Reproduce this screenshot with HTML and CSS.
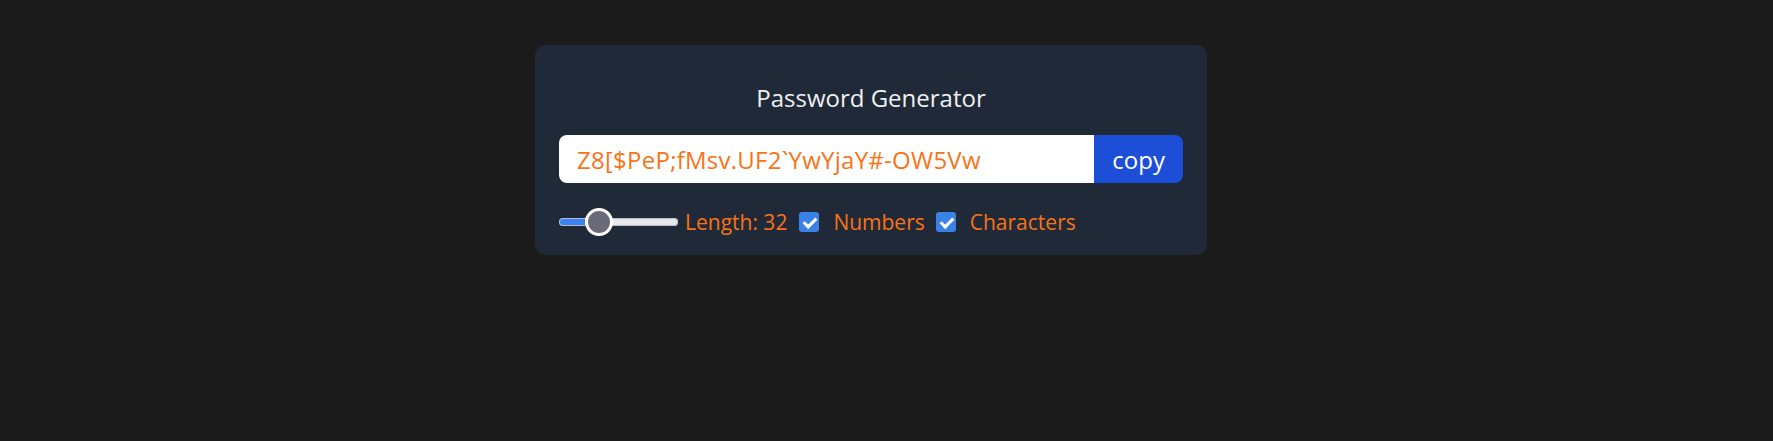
FILE: index.html
```html
<!DOCTYPE html>
<html lang="en">
<head>
<meta charset="utf-8">
<title>Password Generator</title>
<link rel="stylesheet" href="styles.css">
</head>
<body>
<main class="card">
  <h1 class="title">Password Generator</h1>
  <div class="output">
    <input class="password" type="text" value="Z8[$PeP;fMsv.UF2`YwYjaY#-OW5Vw" readonly>
    <button class="copy" type="button">copy</button>
  </div>
  <div class="options">
    <input class="range" type="range" min="8" max="92" value="32">
    <label class="length">Length: 32</label>
    <input class="check" type="checkbox" id="numbers" checked>
    <label class="opt" for="numbers">Numbers</label>
    <input class="check" type="checkbox" id="chars" checked>
    <label class="opt" for="chars">Characters</label>
  </div>
</main>
</body>
</html>
```

FILE: styles.css
```css
html, body {
  margin: 0;
  padding: 0;
  background: #1b1b1b;
  font-family: "Open Sans", "Noto Sans", sans-serif;
}

body {
  padding-top: 45px;
}

.card {
  width: 624px;
  margin-left: 535px;
  padding: 38px 24px 18px;
  background: #1f2937;
  border-radius: 10px;
}

.title {
  margin: 0 0 22px;
  font-size: 24px;
  line-height: 30px;
  font-weight: 400;
  color: #eef0f3;
  text-align: center;
}

.output {
  display: flex;
  height: 48px;
}

.password {
  flex: 1;
  min-width: 0;
  border: none;
  outline: none;
  margin: 0;
  padding: 0 0 0 18px;
  background: #fff;
  border-radius: 8px 0 0 8px;
  font-family: inherit;
  font-size: 24px;
  letter-spacing: 0.25px;
  color: #f97316;
}

.copy {
  border: none;
  margin: 0;
  padding: 0 18px;
  background: #1d4ed8;
  color: #fff;
  border-radius: 0 8px 8px 0;
  font-family: inherit;
  font-size: 24px;
}

.options {
  display: flex;
  align-items: center;
  height: 30px;
  margin-top: 24px;
  color: #f97316;
  font-size: 21px;
}

.range {
  -webkit-appearance: none;
  appearance: none;
  width: 119px;
  height: 8px;
  margin: 0 7px 0 0;
  border-radius: 4px;
  box-shadow: inset 0 0 0 1px #b9bcc4;
  background: linear-gradient(to right, #3b82f6 0, #3b82f6 34%, #e8e8ec 34%, #e8e8ec 100%);
}

.range::-webkit-slider-thumb {
  -webkit-appearance: none;
  appearance: none;
  width: 28px;
  height: 28px;
  border-radius: 50%;
  background: #6b6a78;
  border: 3px solid #ffffff;
  box-sizing: border-box;
}

.length {
  margin-right: 12px;
}

.check {
  -webkit-appearance: none;
  appearance: none;
  position: relative;
  width: 20px;
  height: 20px;
  margin: 0 14px 0 0;
  border-radius: 3px;
  background: #3a82e8;
}

.check::after {
  content: "";
  position: absolute;
  left: 7px;
  top: 3px;
  width: 5px;
  height: 10px;
  border: solid #fff;
  border-width: 0 3px 3px 0;
  transform: rotate(45deg);
}

.opt {
  margin-right: 11px;
}
```
